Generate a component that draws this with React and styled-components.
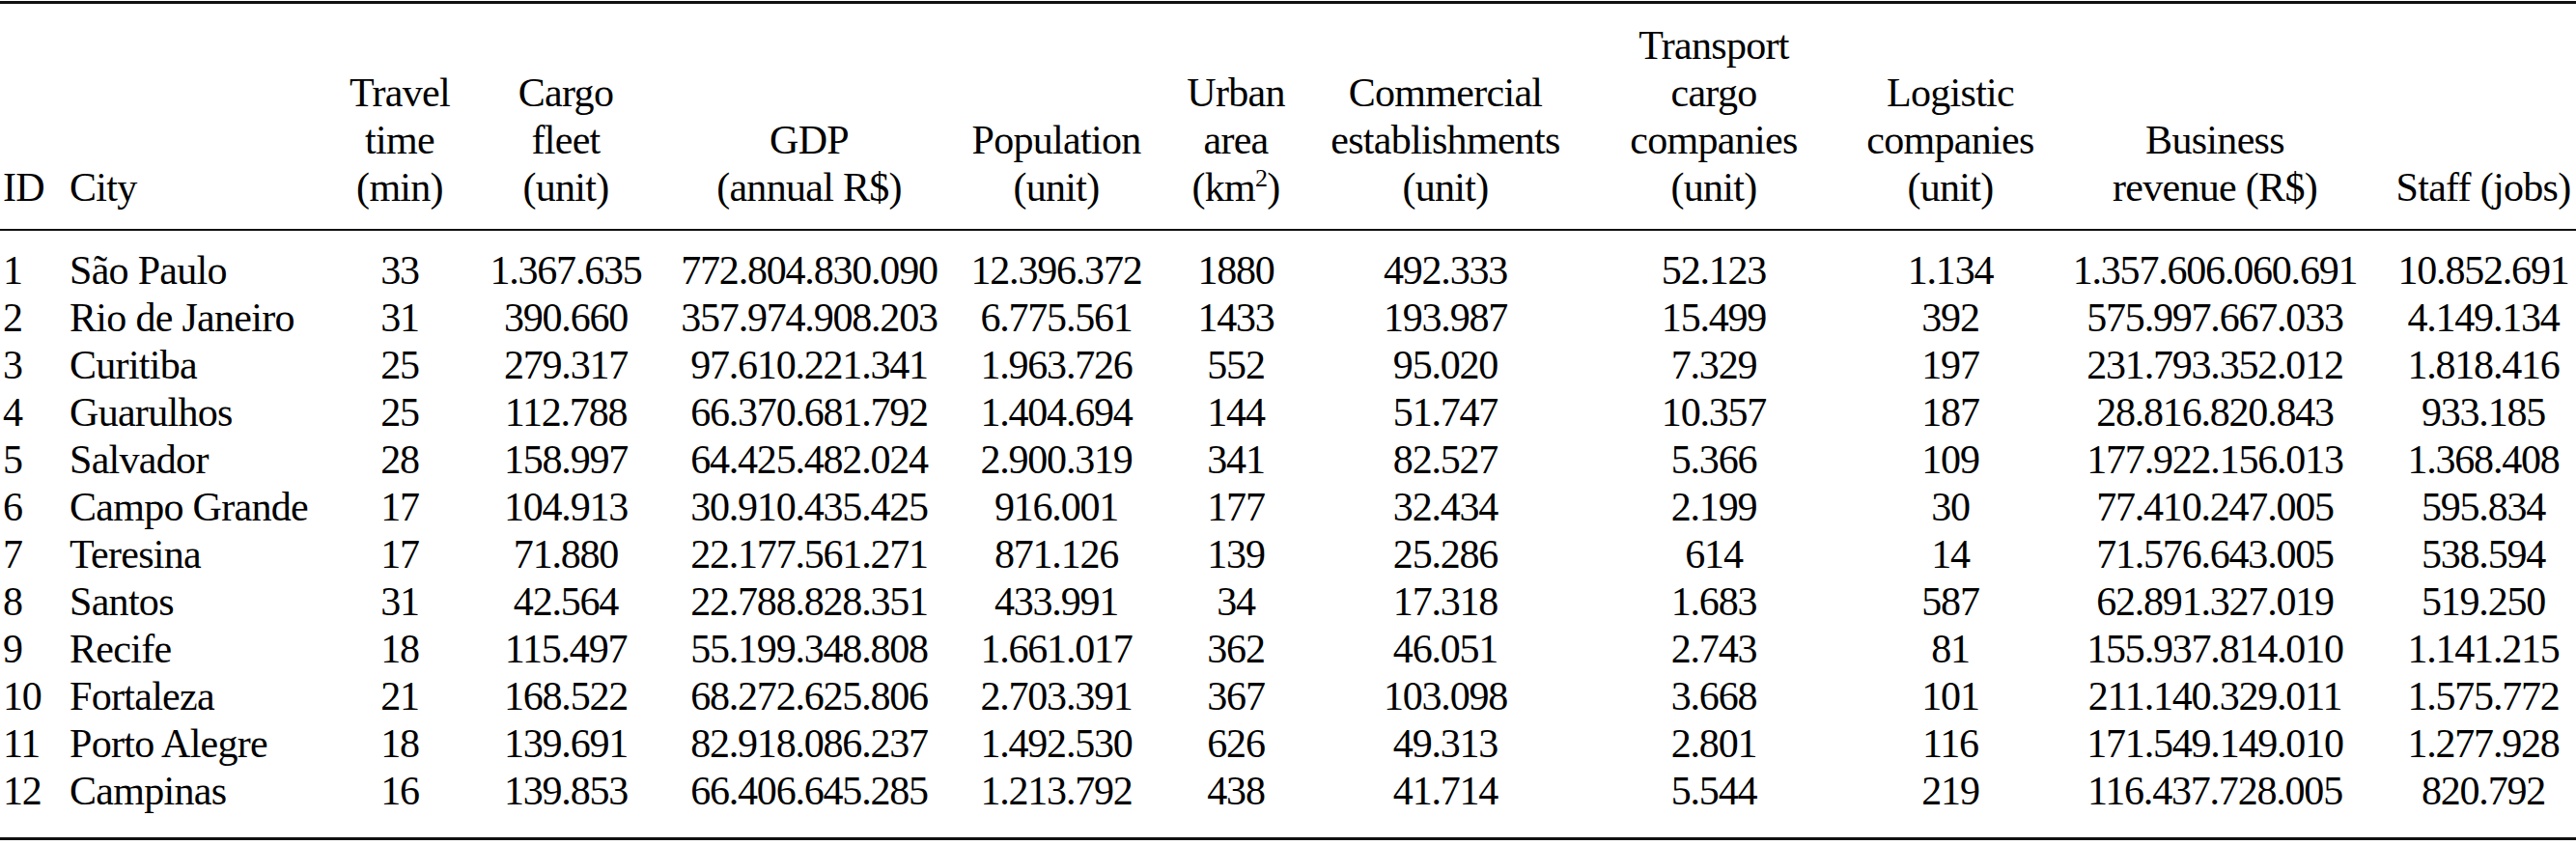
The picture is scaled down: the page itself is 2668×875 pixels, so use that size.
import React from "react";
import styled, { createGlobalStyle } from "styled-components";

const GlobalStyle = createGlobalStyle`
  * {
    margin: 0;
    padding: 0;
    box-sizing: border-box;
  }
  body {
    background: #fff;
    color: #000;
    font-family: "Liberation Serif", "Times New Roman", serif;
  }
`;

const Page = styled.div`
  width: 2668px;
  padding-top: 1px;
`;

const Table = styled.table`
  width: 2668px;
  table-layout: fixed;
  border-collapse: collapse;
  border-top: 3px solid #111;
  border-bottom: 3px solid #111;
  font-size: 42px;
  line-height: 49px;

  tbody tr:first-child td {
    padding-top: 17px;
  }
  tbody tr:last-child td {
    padding-bottom: 23px;
  }
`;

const Col = styled.col`
  width: ${(p) => p.$w}px;
`;

const HeadCell = styled.th`
  font-weight: normal;
  vertical-align: bottom;
  white-space: nowrap;
  text-align: ${(p) => p.$align || "center"};
  padding: 19px 0 18px ${(p) => p.$indent || 0}px;
  letter-spacing: -0.7px;
  border-bottom: 2px solid #111;
`;

const Cell = styled.td`
  white-space: nowrap;
  text-align: ${(p) => p.$align || "center"};
  padding-left: ${(p) => p.$indent || 0}px;
  letter-spacing: ${(p) => (p.$text ? "-0.7px" : "-1.2px")};
`;

const Sup = styled.sup`
  font-size: 26px;
  line-height: 0;
  vertical-align: 15px;
`;

const widths = [70, 262, 164, 180, 324, 188, 184, 250, 306, 184, 364, 192];

const headers = [
  { lines: ["ID"], align: "left", indent: 3 },
  { lines: ["City"], align: "left", indent: 2 },
  { lines: ["Travel", "time", "(min)"] },
  { lines: ["Cargo", "fleet", "(unit)"] },
  { lines: ["GDP", "(annual R$)"] },
  { lines: ["Population", "(unit)"] },
  {
    lines: [
      "Urban",
      "area",
      <>
        (km<Sup>2</Sup>)
      </>,
    ],
  },
  { lines: ["Commercial", "establishments", "(unit)"] },
  { lines: ["Transport", "cargo", "companies", "(unit)"] },
  { lines: ["Logistic", "companies", "(unit)"] },
  { lines: ["Business", "revenue (R$)"] },
  { lines: ["Staff (jobs)"] },
];

const rows = [
  ["1", "São Paulo", "33", "1.367.635", "772.804.830.090", "12.396.372", "1880", "492.333", "52.123", "1.134", "1.357.606.060.691", "10.852.691"],
  ["2", "Rio de Janeiro", "31", "390.660", "357.974.908.203", "6.775.561", "1433", "193.987", "15.499", "392", "575.997.667.033", "4.149.134"],
  ["3", "Curitiba", "25", "279.317", "97.610.221.341", "1.963.726", "552", "95.020", "7.329", "197", "231.793.352.012", "1.818.416"],
  ["4", "Guarulhos", "25", "112.788", "66.370.681.792", "1.404.694", "144", "51.747", "10.357", "187", "28.816.820.843", "933.185"],
  ["5", "Salvador", "28", "158.997", "64.425.482.024", "2.900.319", "341", "82.527", "5.366", "109", "177.922.156.013", "1.368.408"],
  ["6", "Campo Grande", "17", "104.913", "30.910.435.425", "916.001", "177", "32.434", "2.199", "30", "77.410.247.005", "595.834"],
  ["7", "Teresina", "17", "71.880", "22.177.561.271", "871.126", "139", "25.286", "614", "14", "71.576.643.005", "538.594"],
  ["8", "Santos", "31", "42.564", "22.788.828.351", "433.991", "34", "17.318", "1.683", "587", "62.891.327.019", "519.250"],
  ["9", "Recife", "18", "115.497", "55.199.348.808", "1.661.017", "362", "46.051", "2.743", "81", "155.937.814.010", "1.141.215"],
  ["10", "Fortaleza", "21", "168.522", "68.272.625.806", "2.703.391", "367", "103.098", "3.668", "101", "211.140.329.011", "1.575.772"],
  ["11", "Porto Alegre", "18", "139.691", "82.918.086.237", "1.492.530", "626", "49.313", "2.801", "116", "171.549.149.010", "1.277.928"],
  ["12", "Campinas", "16", "139.853", "66.406.645.285", "1.213.792", "438", "41.714", "5.544", "219", "116.437.728.005", "820.792"],
];

export default function App() {
  return (
    <Page>
      <GlobalStyle />
      <Table>
        <colgroup>
          {widths.map((w, i) => (
            <Col key={i} $w={w} />
          ))}
        </colgroup>
        <thead>
          <tr>
            {headers.map((h, i) => (
              <HeadCell key={i} $align={h.align} $indent={h.indent}>
                {h.lines.map((line, j) => (
                  <React.Fragment key={j}>
                    {j > 0 && <br />}
                    {line}
                  </React.Fragment>
                ))}
              </HeadCell>
            ))}
          </tr>
        </thead>
        <tbody>
          {rows.map((r) => (
            <tr key={r[0]}>
              {r.map((v, i) => (
                <Cell
                  key={i}
                  $align={i < 2 ? "left" : "center"}
                  $indent={i === 0 ? 3 : i === 1 ? 2 : 0}
                  $text={i === 1}
                >
                  {v}
                </Cell>
              ))}
            </tr>
          ))}
        </tbody>
      </Table>
    </Page>
  );
}
